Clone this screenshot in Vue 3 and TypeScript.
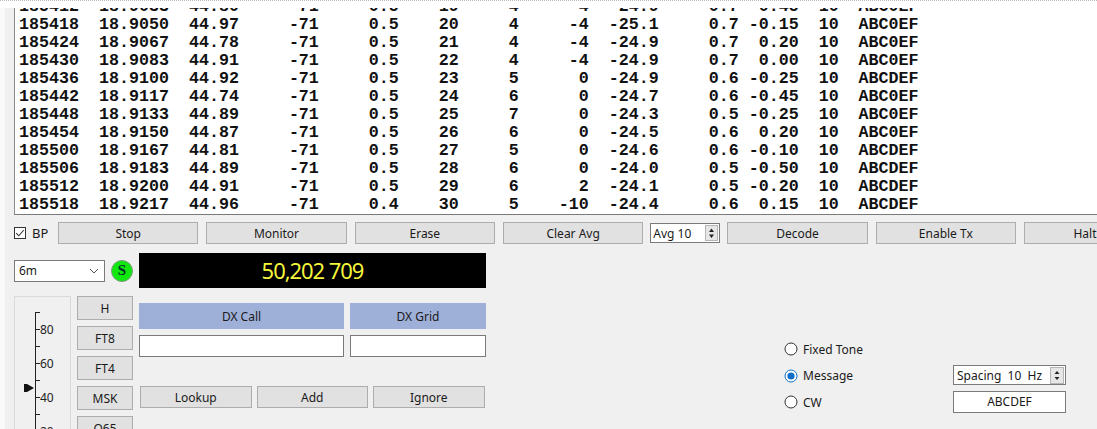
<script setup lang="ts">
type Row = [string, string, string, string, string, string, string, string, string, string, string, string, string]

const rows: Row[] = [
  ['185412', '18.9033', '44.80', '-71', '0.5', '19', '4', '-4', '-24.9', '0.7', '-0.45', '10', 'ABC0EF'],
  ['185418', '18.9050', '44.97', '-71', '0.5', '20', '4', '-4', '-25.1', '0.7', '-0.15', '10', 'ABC0EF'],
  ['185424', '18.9067', '44.78', '-71', '0.5', '21', '4', '-4', '-24.9', '0.7', '0.20', '10', 'ABC0EF'],
  ['185430', '18.9083', '44.91', '-71', '0.5', '22', '4', '-4', '-24.9', '0.7', '0.00', '10', 'ABC0EF'],
  ['185436', '18.9100', '44.92', '-71', '0.5', '23', '5', '0', '-24.9', '0.6', '-0.25', '10', 'ABCDEF'],
  ['185442', '18.9117', '44.74', '-71', '0.5', '24', '6', '0', '-24.7', '0.6', '-0.45', '10', 'ABC0EF'],
  ['185448', '18.9133', '44.89', '-71', '0.5', '25', '7', '0', '-24.3', '0.5', '-0.25', '10', 'ABC0EF'],
  ['185454', '18.9150', '44.87', '-71', '0.5', '26', '6', '0', '-24.5', '0.6', '0.20', '10', 'ABC0EF'],
  ['185500', '18.9167', '44.81', '-71', '0.5', '27', '5', '0', '-24.6', '0.6', '-0.10', '10', 'ABCDEF'],
  ['185506', '18.9183', '44.89', '-71', '0.5', '28', '6', '0', '-24.0', '0.5', '-0.50', '10', 'ABCDEF'],
  ['185512', '18.9200', '44.91', '-71', '0.5', '29', '6', '2', '-24.1', '0.5', '-0.20', '10', 'ABCDEF'],
  ['185518', '18.9217', '44.96', '-71', '0.4', '30', '5', '-10', '-24.4', '0.6', '0.15', '10', 'ABCDEF'],
]

const ends = [6, 15, 22, 30, 38, 44, 50, 57, 64, 72, 78, 82, 90]

function formatRow(r: Row): string {
  let line = ''
  r.forEach((v, i) => {
    line = line.padEnd(ends[i] - v.length, ' ') + v
  })
  return line
}

const lines = rows.map(formatRow)
const topButtons = ['Stop', 'Monitor', 'Erase', 'Clear Avg']
const endButtons = ['Decode', 'Enable Tx']
const modes = ['H', 'FT8', 'FT4', 'MSK', 'Q65']
const actions = ['Lookup', 'Add', 'Ignore']
const radios = [
  { label: 'Fixed Tone', on: false },
  { label: 'Message', on: true },
  { label: 'CW', on: false },
]
const ticks = [
  { y: 32, label: '80' },
  { y: 66, label: '60' },
  { y: 100, label: '40' },
  { y: 134, label: '20' },
]
const minor = [15, 49, 83, 117]
</script>

<template>
  <div class="app">
    <div class="top-strip"></div>
    <div class="log-wrap">
      <div class="log">
        <div v-for="(l, i) in lines" :key="i" class="line">{{ l }}</div>
      </div>
    </div>

    <div class="controls">
      <label class="bp">
        <svg class="check" width="12" height="12" viewBox="0 0 12 12">
          <rect x="0.5" y="0.5" width="11" height="11" fill="#fff" stroke="#333" />
          <path d="M2.2 6.2 L4.8 8.8 L9.8 3" fill="none" stroke="#333" stroke-width="1.1" />
        </svg>
        <span>BP</span>
      </label>
      <button v-for="b in topButtons" :key="b" class="btn wide">{{ b }}</button>
      <div class="spin avg">
        <span>Avg 10</span>
        <span class="arrows">
          <svg width="13" height="16" viewBox="0 0 13 16">
            <rect x="0.5" y="0.5" width="12" height="15" fill="#e6e6e6" stroke="#b5b5b5" />
            <path d="M4 7 L6.5 3.5 L9 7 Z M4 9.5 L9 9.5 L6.5 13 Z" fill="#222" />
          </svg>
        </span>
      </div>
      <button v-for="b in endButtons" :key="b" class="btn wide">{{ b }}</button>
      <button class="btn wide halt">Halt</button>
    </div>

    <div class="freq-row">
      <div class="band">
        <span>6m</span>
        <svg width="10" height="6" viewBox="0 0 10 6">
          <path d="M1 1 L5 5 L9 1" fill="none" stroke="#555" stroke-width="1" />
        </svg>
      </div>
      <div class="led">S</div>
      <div class="freq">50,202 709</div>
    </div>

    <div class="bottom">
      <div class="meter">
        <svg width="55" height="140" viewBox="0 0 55 140">
          <path d="M20.5 15 V140" stroke="#222" fill="none" />
          <path v-for="m in minor" :key="m" :d="`M20 ${m + 0.5} H25`" stroke="#222" fill="none" />
          <path v-for="t in ticks" :key="t.label" :d="`M20 ${t.y + 0.5} H25`" stroke="#222" fill="none" />
          <text v-for="t in ticks" :key="t.label + 't'" x="25" :y="t.y + 5" class="tick">{{ t.label }}</text>
          <path d="M9 87 H12 L19 91 L12 95 H9 Z" fill="#111" />
        </svg>
      </div>

      <div class="modes">
        <button v-for="m in modes" :key="m" class="btn mode">{{ m }}</button>
      </div>

      <div class="dx">
        <div class="dx-grid">
          <div class="dx-label">DX Call</div>
          <div class="dx-label">DX Grid</div>
          <div class="dx-input"></div>
          <div class="dx-input"></div>
        </div>
        <div class="actions">
          <button v-for="a in actions" :key="a" class="btn action">{{ a }}</button>
        </div>
      </div>

      <div class="radios">
        <div v-for="r in radios" :key="r.label" class="radio">
          <svg width="14" height="14" viewBox="0 0 14 14">
            <circle cx="7" cy="7" r="6" :fill="'#fff'" :stroke="r.on ? '#0f6fc6' : '#333'" />
            <circle v-if="r.on" cx="7" cy="7" r="3.6" fill="#0f6fc6" />
          </svg>
          <span>{{ r.label }}</span>
        </div>
      </div>

      <div class="tx">
        <div class="spin spacing">
          <span class="spacing-text">Spacing&nbsp; 10&nbsp; Hz</span>
          <span class="arrows">
            <svg width="14" height="17" viewBox="0 0 14 17">
              <rect x="0.5" y="0.5" width="13" height="16" fill="#e6e6e6" stroke="#b5b5b5" />
              <path d="M4.5 7 L7 4 L9.5 7 Z M4.5 10 L9.5 10 L7 13 Z" fill="#222" />
            </svg>
          </span>
        </div>
        <div class="msg">ABCDEF</div>
      </div>
    </div>
  </div>
</template>

<style>
html,
body {
  margin: 0;
  background: #f0f0f0;
  overflow: hidden;
}
</style>

<style scoped>
.app {
  width: 1097px;
  height: 429px;
  overflow: hidden;
  background: #f0f0f0;
  box-shadow: inset 5px 0 0 #f9f9f9;
  font-family: "Noto Sans", "Open Sans", sans-serif;
  font-size: 12px;
  color: #1a1a1a;
  display: flex;
  flex-direction: column;
}
.top-strip {
  height: 8px;
  flex: none;
  background: #fff;
  border-top: 1px dotted #bbb;
  box-sizing: border-box;
}
.log-wrap {
  flex: none;
  height: 207px;
  padding-left: 14px;
  box-sizing: border-box;
}
.log {
  height: 207px;
  box-sizing: border-box;
  background: #fff;
  border-left: 1px solid #8a8a8a;
  border-bottom: 1px solid #7a7a7a;
  padding: 0 0 0 4px;
  overflow: hidden;
  display: flex;
  flex-direction: column;
  justify-content: flex-end;
  font-family: "Liberation Mono", monospace;
  font-weight: 700;
  font-size: 16.67px;
  line-height: 18px;
  color: #111;
}
.line {
  flex: none;
  white-space: pre;
  height: 18px;
}
.controls {
  flex: none;
  display: flex;
  align-items: center;
  margin-top: 7px;
  padding-left: 14px;
  height: 22px;
  gap: 8px;
  white-space: nowrap;
}
.bp {
  display: flex;
  align-items: center;
  gap: 6px;
  width: 36px;
  flex: none;
  font-size: 13px;
}
.check {
  flex: none;
}
.btn {
  display: block;
  box-sizing: border-box;
  background: #e1e1e1;
  border: 1px solid #adadad;
  padding: 0;
  margin: 0;
  font: inherit;
  color: inherit;
  text-align: center;
}
.wide {
  width: 140.33px;
  height: 22px;
  flex: none;
}
.halt {
  width: 122px;
}
.spin {
  flex: none;
  box-sizing: border-box;
  display: flex;
  align-items: center;
  justify-content: space-between;
  background: #fff;
  border: 1px solid #7a7a7a;
}
.avg {
  width: 70px;
  height: 20px;
  padding: 0 1px 0 2px;
  margin: 0 -1px;
}
.arrows {
  display: flex;
}
.freq-row {
  flex: none;
  display: flex;
  align-items: center;
  gap: 6px;
  margin-top: 9px;
  padding-left: 14px;
  height: 35px;
}
.band {
  box-sizing: border-box;
  width: 91px;
  height: 22px;
  display: flex;
  align-items: center;
  justify-content: space-between;
  padding: 0 5px 0 4px;
  background: #fff;
  border: 1px solid #7a7a7a;
}
.led {
  width: 22px;
  height: 22px;
  border-radius: 50%;
  background: #10e810;
  border: 1px solid #7a9a7a;
  box-sizing: border-box;
  display: flex;
  align-items: center;
  justify-content: center;
  font-family: "Liberation Serif", serif;
  font-weight: 700;
  font-size: 15px;
  color: #032;
}
.freq {
  width: 347px;
  height: 35px;
  box-sizing: border-box;
  padding-bottom: 2px;
  background: #000;
  color: #f5f53c;
  display: flex;
  align-items: center;
  justify-content: center;
  font-size: 22px;
  letter-spacing: -1.05px;
}
.bottom {
  flex: none;
  display: flex;
  align-items: flex-start;
  margin-top: 8px;
  padding-left: 14px;
}
.meter {
  flex: none;
  width: 57px;
  height: 140px;
  box-sizing: border-box;
  border: 1px solid #dadada;
  border-bottom: none;
  margin-right: 6px;
}
.meter svg {
  display: block;
}
.tick {
  font-family: "Noto Sans", sans-serif;
  font-size: 12px;
  fill: #222;
}
.modes {
  flex: none;
  width: 56px;
  display: flex;
  flex-direction: column;
  gap: 6px;
  margin-right: 6px;
}
.mode {
  width: 56px;
  height: 24px;
}
.dx {
  flex: none;
  width: 347px;
  padding-top: 7px;
}
.dx-grid {
  display: grid;
  grid-template-columns: 205px 136px;
  column-gap: 6px;
  row-gap: 6px;
}
.dx-label {
  height: 26px;
  line-height: 27px;
  text-align: center;
  background: #9fb0d8;
}
.dx-input {
  height: 22px;
  box-sizing: border-box;
  background: #fff;
  border: 1px solid #7a7a7a;
}
.actions {
  display: flex;
  gap: 5px;
  margin-top: 29px;
  padding-left: 1px;
}
.action {
  height: 22px;
  width: 111.5px;
  flex: none;
}
.radios {
  flex: none;
  margin-left: 298px;
  padding-top: 40px;
  width: 169px;
  display: flex;
  flex-direction: column;
  gap: 0;
}
.radio {
  height: 26.5px;
  display: flex;
  align-items: center;
  gap: 5px;
}
.radio svg {
  flex: none;
}
.tx {
  flex: none;
  width: 113px;
  padding-top: 69px;
  display: flex;
  flex-direction: column;
  gap: 6px;
}
.spacing {
  height: 20px;
  padding: 0 1px 0 3px;
}
.spacing-text {
  white-space: nowrap;
}
.msg {
  height: 22px;
  line-height: 20px;
  box-sizing: border-box;
  text-align: center;
  background: #fff;
  border: 1px solid #7a7a7a;
}
</style>
